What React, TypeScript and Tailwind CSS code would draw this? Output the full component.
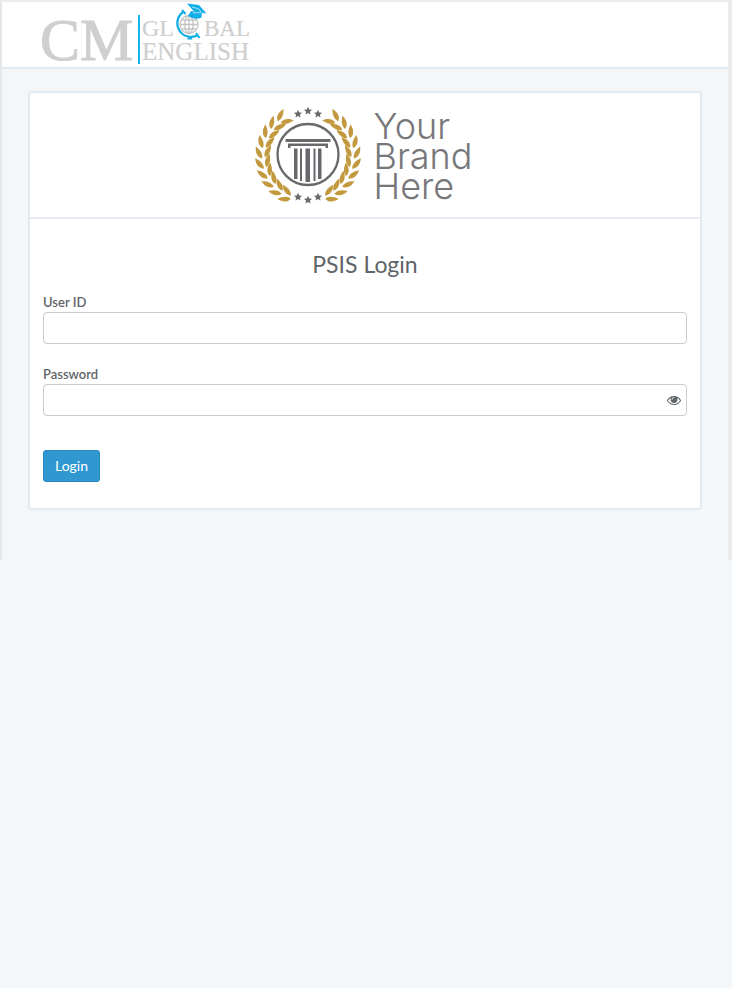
import { useState } from 'react';

const LEAF_INDEXES = [0, 1, 2, 3, 4, 5, 6, 7, 8, 9];
const LEAF = 'M0 0C3 -3.400 8 -3.800 13.500 0C8 2.700 3 2.700 0 0Z';
const STAR = 'M0 -4.200L1.200 -1.400L4.100 -1.200L1.900 .7L2.600 3.600L0 2L-2.600 3.600L-1.900 .7L-4.100 -1.200L-1.200 -1.400Z';

const STARS = [
  [44, 9],
  [54, 6],
  [64, 9],
  [44, 92],
  [54, 95],
  [64, 92],
];

function SiteLogo() {
  return (
    <svg viewBox="0 0 216 64" className="block h-16 w-[216px] overflow-visible" role="img" aria-label="CM Global English">
      <g fill="#cfcfcf" stroke="#cfcfcf" className="font-['Liberation_Serif',serif]">
        <text x="-2" y="58" fontSize="60" strokeWidth="1">CM</text>
        <text x="100" y="34" fontSize="24" strokeWidth=".2">GL</text>
        <text x="162" y="34" fontSize="23" strokeWidth=".2">BAL</text>
        <text x="100" y="58" fontSize="25" strokeWidth=".2">ENGLISH</text>
      </g>
      <rect x="96" y="13" width="2" height="49" fill="#12b5ea" />
      <g fill="none" stroke="#c4c4c4" strokeWidth="1.300">
        <circle cx="147" cy="22.500" r="9" />
        <ellipse cx="147" cy="22.500" rx="4.200" ry="9" />
        <path d="M147 13.500V31.500M138 22.500H156M140 18H154M140 27H154" />
      </g>
      <path d="M142 9.500A13.500 13.500 0 1 0 156 33" fill="none" stroke="#12aee8" strokeWidth="2.300" />
      <path d="M140 8L143.500 12M154 31L157.500 36M145.500 36.500H150" stroke="#12aee8" strokeWidth="2" />
      <path d="M145 1.500L157 3L164.500 11.500L152 9.500Z" fill="#12aee8" />
      <path d="M149 9L146 14Q153 18.500 159.500 15.500L160 10L152 9.500Z" fill="#12aee8" />
      <path d="M150 5L157 7L159 10.500L151 11" fill="none" stroke="#fff" strokeWidth=".6" />
    </svg>
  );
}

function Branch() {
  return (
    <g fill="#c2993f">
      {LEAF_INDEXES.map((i) => (
        <g key={i} transform={`rotate(${112 + i * 13} 54 51) translate(100 51)`}>
          <path d={LEAF} transform="rotate(66)" />
          <path d={LEAF} transform="translate(-3 1) rotate(120)" />
        </g>
      ))}
    </g>
  );
}

function Emblem() {
  return (
    <svg viewBox="0 0 108 102" className="h-[102px] w-[108px]" aria-hidden="true">
      <Branch />
      <g transform="translate(108 0) scale(-1 1)">
        <Branch />
      </g>
      <g fill="#68686c">
        {STARS.map(([x, y]) => (
          <path key={`${x}-${y}`} d={STAR} transform={`translate(${x} ${y})`} />
        ))}
        <path d="M31.500 34H76.500V37H31.500ZM34 38.500H74V43H71.500V41H36.500V43H34ZM40 43.500H43.500V74H40ZM46 43.500H48V76H46ZM51.500 43.500H56V77H51.500ZM59.500 43.500H61.500V76H59.500ZM64 43.500H67.500V74H64Z" />
      </g>
      <circle cx="54" cy="49.500" r="30.500" fill="none" stroke="#68686c" strokeWidth="2.300" />
    </svg>
  );
}

function EyeIcon() {
  return (
    <svg viewBox="0 0 1792 1792" className="h-3.5 w-3.5" fill="currentColor" aria-hidden="true">
      <path d="M1664 960q-152-236-381-353 61 104 61 225 0 185-131.500 316.500t-316.500 131.500-316.500-131.500-131.500-316.500q0-121 61-225-229 117-381 353 133 205 333.500 326.500t434.500 121.500 434.500-121.500 333.500-326.500zM944 576q0-20-14-34t-34-14q-125 0-214.500 89.500t-89.500 214.500q0 20 14 34t34 14 34-14 14-34q0-86 61-147t147-61q20 0 34-14t14-34zM1792 960q0 34-20 69-140 230-376.500 368.500t-499.500 138.500-499.500-139-376.500-368q-20-35-20-69t20-69q140-229 376.500-368t499.500-139 499.500 139 376.500 368q20 35 20 69z" />
    </svg>
  );
}

export default function App() {
  const [userId, setUserId] = useState('');
  const [password, setPassword] = useState('');
  const [visible, setVisible] = useState(false);

  return (
    <div className="min-h-screen bg-[#f3f7fa] font-['Lato',sans-serif] text-[#5f6468]">
      <div className="border-t-2 border-r-4 border-l-2 border-t-[#ececec] border-r-[#ececec] border-l-[#e4e8eb] pb-[50px]">
        <header className="border-b-2 border-[#e1eaf0] bg-white px-10 pb-px">
          <SiteLogo />
        </header>

        <main className="px-[26px] pt-[22px]">
          <div className="rounded border-2 border-[#e1eaf0] bg-white">
            <div className="flex items-center justify-center gap-3 border-b-2 border-[#e5ebf0] pt-3 pr-1 pb-[10px]">
              <Emblem />
              <div className="font-['Inter',sans-serif] text-4xl leading-[30px] font-light text-[#77777a]">
                <div>Your</div>
                <div>Brand</div>
                <div>Here</div>
              </div>
            </div>

            <form className="px-[13px] pt-[31px] pb-[26px]" onSubmit={(e) => e.preventDefault()}>
              <h1 className="mb-3.5 text-center text-[23px] leading-7">PSIS Login</h1>

              <label htmlFor="userId" className="block text-[13px] leading-5 font-semibold">User ID</label>
              <input
                id="userId"
                type="text"
                value={userId}
                onChange={(e) => setUserId(e.target.value)}
                className="block h-8 w-full rounded border border-[#cccccc] bg-white px-3 text-sm outline-none focus:border-[#2f96d2]"
              />

              <label htmlFor="password" className="mt-5 block text-[13px] leading-5 font-semibold">Password</label>
              <div className="flex h-8 items-center rounded border border-[#cccccc] bg-white pr-[5px] focus-within:border-[#2f96d2]">
                <input
                  id="password"
                  type={visible ? 'text' : 'password'}
                  value={password}
                  onChange={(e) => setPassword(e.target.value)}
                  className="h-full min-w-0 flex-1 bg-transparent px-3 text-sm outline-none"
                />
                <button type="button" aria-label="Show password" onClick={() => setVisible(!visible)}>
                  <EyeIcon />
                </button>
              </div>

              <button
                type="submit"
                className="mt-[34px] h-8 rounded-[3px] border border-[#2789c4] bg-[#3097d1] px-[11px] text-sm text-white hover:bg-[#2789c4]"
              >
                Login
              </button>
            </form>
          </div>
        </main>
      </div>
    </div>
  );
}
